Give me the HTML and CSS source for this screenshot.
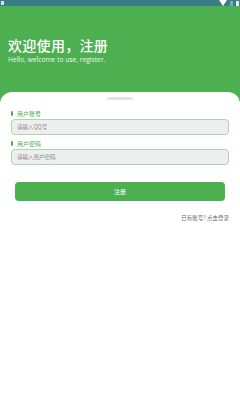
FILE: index.html
```html
<!DOCTYPE html>
<html lang="zh">
<head>
	<meta charset="UTF-8">
	<title>注册</title>
	<link rel="stylesheet" href="styles.css">
</head>
<body>
	<div class="statusbar">
		<span class="statusbar__left"></span>
		<span class="statusbar__icons">
			<svg width="8" height="6" viewBox="0 0 8 6"><path d="M0 0 H8 L4 6 Z" fill="#fff"/></svg>
			<span class="statusbar__bat dim"></span>
			<span class="statusbar__bat"></span>
		</span>
	</div>
	<div class="header">
		<h1 class="header__title">欢迎使用，注册</h1>
		<p class="header__sub">Hello, welcome to use, register.</p>
	</div>
	<div class="card">
		<div class="card__handle"></div>
		<div class="field">
			<div class="field__label">用户账号</div>
			<div class="field__input">请输入QQ号</div>
		</div>
		<div class="field">
			<div class="field__label">用户密码</div>
			<div class="field__input">请输入用户密码</div>
		</div>
		<div class="btn">注册</div>
		<div class="login">已有账号? 点击登录</div>
	</div>
</body>
</html>
```
FILE: styles.css
```css
body {
	margin: 0;
	width: 240px;
	height: 400px;
	background-color: #4caf50;
	font-family: "Noto Sans CJK SC", "Open Sans", sans-serif;
	overflow: hidden;
}
.statusbar {
	height: 6px;
	background-color: #3a7d85;
	display: flex;
	justify-content: space-between;
	align-items: center;
	padding: 0 1px;
}
.statusbar__left {
	width: 3px;
	height: 4px;
	background-color: #cfe3e6;
}
.statusbar__icons {
	display: flex;
	align-items: center;
	gap: 3px;
}
.statusbar__icons svg {
	display: block;
}
.statusbar__bat {
	width: 3px;
	height: 5px;
	background-color: #dfeff0;
}
.statusbar__bat.dim {
	background-color: #7aa9ae;
}
.header {
	height: 86px;
	padding: 0 8px;
	box-sizing: border-box;
	color: #fff;
	padding-top: 29px;
}
.header__title {
	margin: 0;
	font-size: 14px;
	font-weight: 500;
	line-height: 20px;
	letter-spacing: 0.3px;
}
.header__sub {
	margin: 0;
	font-family: "Open Sans", sans-serif;
	font-size: 6.7px;
	line-height: 9px;
	opacity: 0.9;
}
.card {
	background-color: #fff;
	border-radius: 12px 12px 0 0;
	height: 308px;
	padding: 5px 11px 0;
}
.card__handle {
	width: 26px;
	height: 3px;
	border-radius: 2px;
	background-color: #e2e2e2;
	margin: 0 auto 10px;
}
.field {
	margin-bottom: 5px;
}
.field__label {
	font-size: 6px;
	line-height: 8px;
	color: #4caf50;
	padding-left: 6px;
	position: relative;
	margin-bottom: 1px;
}
.field__label::before {
	content: "";
	position: absolute;
	left: 0;
	top: 1px;
	width: 2px;
	height: 5px;
	border-radius: 1px;
	background-color: #4caf50;
}
.field__input {
	height: 14px;
	border: 1px solid #a9d6aa;
	border-radius: 4px;
	background-color: #eeeeee;
	font-size: 5.5px;
	line-height: 14px;
	color: #8a8a8a;
	padding-left: 5px;
}
.btn {
	margin: 17px 4px 0;
	height: 19px;
	border-radius: 4px;
	background-color: #4caf50;
	color: #fff;
	font-size: 6px;
	line-height: 19px;
	text-align: center;
}
.login {
	margin-top: 13px;
	text-align: right;
	font-size: 5.5px;
	color: #666;
}
```
